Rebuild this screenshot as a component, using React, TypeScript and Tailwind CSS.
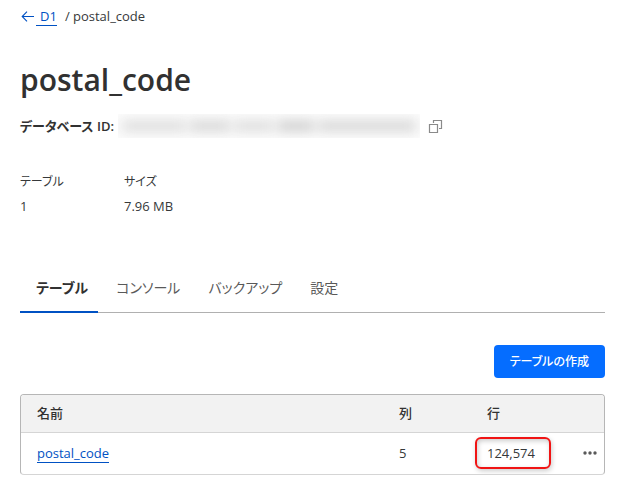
import React, { useState } from "react";

const tabs = ["テーブル", "コンソール", "バックアップ", "設定"];

const stats = [
  { label: "テーブル", value: "1" },
  { label: "サイズ", value: "7.96 MB" },
];

const tables = [{ name: "postal_code", columns: 5, rows: "124,574" }];

const ArrowLeft = () => (
  <svg className="w-4 h-4" viewBox="0 0 16 16" fill="none" stroke="#0051c3" aria-hidden="true">
    <path d="M14 8.5H2.2M7 3.7 2.2 8.5 7 13.3" strokeWidth="1.1" />
  </svg>
);

const CopyIcon = () => (
  <svg className="w-4 h-4" viewBox="0 0 16 16" fill="none" stroke="#8a8a8a" aria-hidden="true">
    <path d="M1.5 6.5h8v8h-8zM5.5 5V2.5h8v8H11" strokeWidth="1.2" />
  </svg>
);

const DotsIcon = () => (
  <svg className="w-4 h-4" viewBox="0 0 16 16" fill="#595959" aria-hidden="true">
    <circle cx="3" cy="8" r="1.7" />
    <circle cx="8" cy="8" r="1.7" />
    <circle cx="13" cy="8" r="1.7" />
  </svg>
);

// The id is masked, only soft blocks are shown in its place
const MaskedId = () => (
  <span className="h-6 w-[302px] overflow-hidden bg-[#fcfcfc] select-none" aria-hidden="true">
    <span className="flex gap-1 h-3 mt-1.5 mx-1 blur-[6px]">
      <span className="w-16 bg-[#dfdfdf]" />
      <span className="w-10 bg-[#d9d9d9]" />
      <span className="w-10 bg-[#dfdfdf]" />
      <span className="w-9 bg-[#d2d2d2]" />
      <span className="flex-1 bg-[#d9d9d9]" />
    </span>
  </span>
);

const App = () => {
  const [activeTab, setActiveTab] = useState("テーブル");

  return (
    <main className="min-h-screen bg-white pl-5 pr-4 pt-1.5 pb-3 text-sm leading-5 text-[#36393a] font-['Open_Sans','Noto_Sans_CJK_JP',sans-serif] [font-feature-settings:'palt']">
      {/* Breadcrumb */}
      <nav className="flex items-center gap-2 text-[13px]">
        <a href="#d1" className="flex items-center text-[#0051c3]">
          <ArrowLeft />
          <span className="border-b border-[#0051c3] pl-1 leading-[18px]">D1</span>
        </a>
        <span>/ postal_code</span>
      </nav>

      <h1 className="mt-[34px] text-[30px] leading-10 font-semibold text-[#313131]">postal_code</h1>

      {/* Database id */}
      <div className="mt-3.5 flex items-center gap-1">
        <span className="text-[13px] font-semibold text-[#313131]">データベース ID:</span>
        <MaskedId />
        <button type="button" aria-label="コピー" className="ml-1 cursor-pointer">
          <CopyIcon />
        </button>
      </div>

      {/* Stats */}
      <dl className="mt-[34px] flex">
        {stats.map(({ label, value }) => (
          <div key={label} className="w-[104px]">
            <dt className="text-xs leading-5">{label}</dt>
            <dd className="mt-1 text-[13px]">{value}</dd>
          </div>
        ))}
      </dl>

      {/* Tabs */}
      <div role="tablist" className="mt-12 flex gap-0.5 border-b border-[#b0b0b0]">
        {tabs.map((tab) => (
          <button
            key={tab}
            type="button"
            role="tab"
            aria-selected={tab === activeTab}
            onClick={() => setActiveTab(tab)}
            className={`h-[49px] pl-4 pr-2.5 text-sm -mb-px border-b-2 cursor-pointer ${
              tab === activeTab
                ? "border-[#0051c3] font-semibold text-[#313131]"
                : "border-transparent text-[#595959]"
            }`}
          >
            {tab}
          </button>
        ))}
      </div>

      <div className="mt-8 flex justify-end">
        <button
          type="button"
          className="h-[33px] px-4 rounded bg-[#056dff] text-xs font-medium text-white cursor-pointer"
        >
          テーブルの作成
        </button>
      </div>

      {/* Table list */}
      <div className="mt-4 rounded border border-[#b6b6b6] border-b-[#d5d5d5] overflow-hidden">
        <table className="w-full table-fixed text-left">
          <thead>
            <tr className="h-[37px] bg-[#f2f2f2] border-b border-[#d5d5d5] text-[13px] text-[#313131]">
              <th className="pl-4 font-medium">名前</th>
              <th className="w-[88px] pl-4 font-medium">列</th>
              <th className="w-[97px] pl-4 font-medium">行</th>
              <th className="w-9" aria-label="操作" />
            </tr>
          </thead>
          <tbody>
            {tables.map(({ name, columns, rows }) => (
              <tr key={name} className="h-[42px] text-[13px]">
                <td className="pl-4">
                  <a href="#postal_code" className="border-b border-[#0051c3] text-[#0051c3]">
                    {name}
                  </a>
                </td>
                <td className="pl-4">{columns}</td>
                <td className="pl-4">
                  <span className="relative">
                    {rows}
                    <span className="absolute -left-3 -right-4 -inset-y-[7px] rounded-md border-2 border-[#f01414] shadow-[1px_2px_5px_rgba(0,0,0,0.2),inset_1px_2px_5px_rgba(0,0,0,0.2)]" />
                  </span>
                </td>
                <td>
                  <button type="button" aria-label="メニュー" className="block ml-3.5 cursor-pointer">
                    <DotsIcon />
                  </button>
                </td>
              </tr>
            ))}
          </tbody>
        </table>
      </div>
    </main>
  );
};

export default App;
